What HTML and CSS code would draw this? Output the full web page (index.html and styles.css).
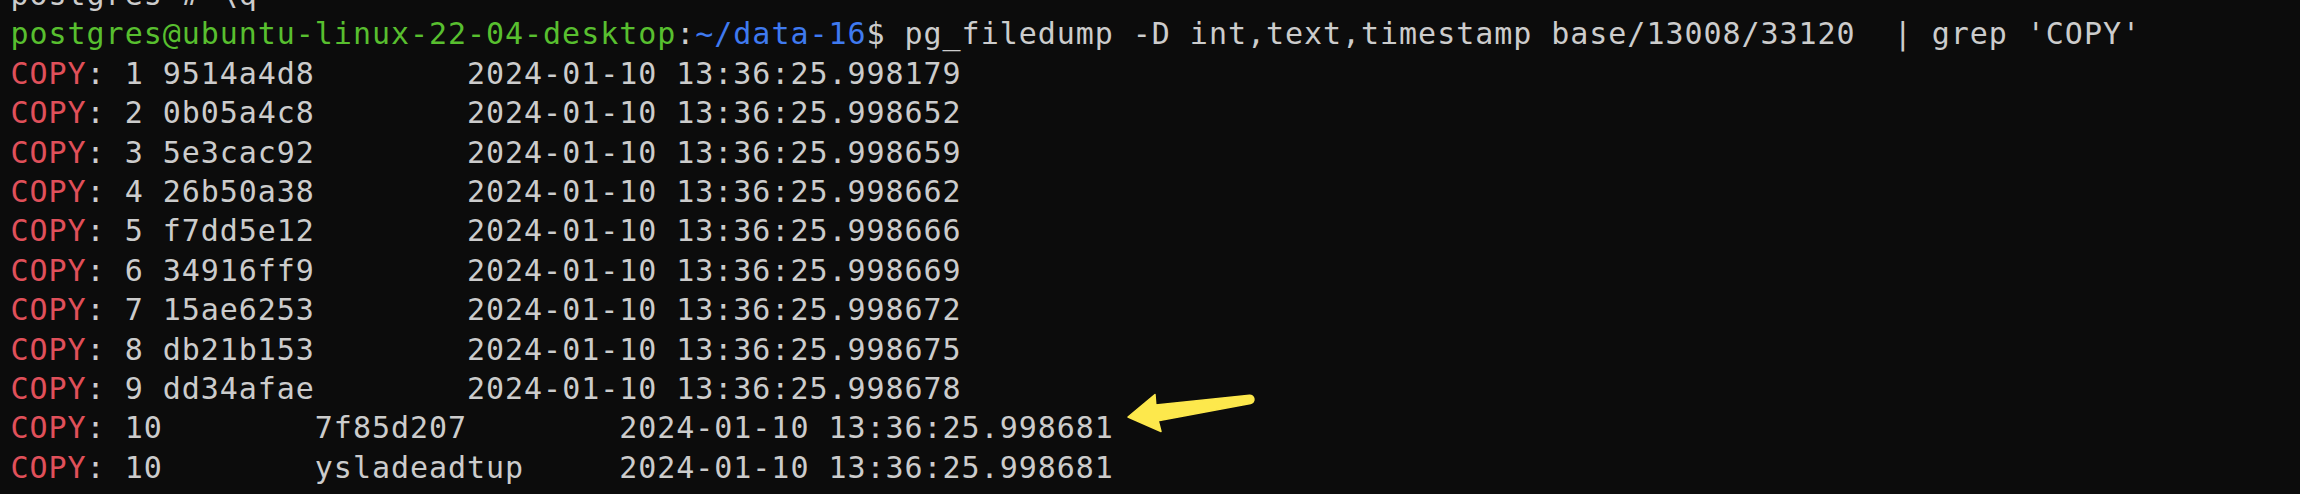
FILE: index.html
```html
<!DOCTYPE html>
<html lang="en">
<head>
<meta charset="utf-8">
<title>Terminal</title>
<link rel="stylesheet" href="styles.css">
</head>
<body>
<main class="terminal">
  <div class="screen">
    <div class="line">postgres=# \q</div>
    <div class="line"><span class="user">postgres@ubuntu-linux-22-04-desktop</span>:<span class="path">~/data-16</span>$ pg_filedump -D int,text,timestamp base/13008/33120  | grep 'COPY'</div>
    <div class="line"><span class="match">COPY</span>: 1 9514a4d8        2024-01-10 13:36:25.998179</div>
    <div class="line"><span class="match">COPY</span>: 2 0b05a4c8        2024-01-10 13:36:25.998652</div>
    <div class="line"><span class="match">COPY</span>: 3 5e3cac92        2024-01-10 13:36:25.998659</div>
    <div class="line"><span class="match">COPY</span>: 4 26b50a38        2024-01-10 13:36:25.998662</div>
    <div class="line"><span class="match">COPY</span>: 5 f7dd5e12        2024-01-10 13:36:25.998666</div>
    <div class="line"><span class="match">COPY</span>: 6 34916ff9        2024-01-10 13:36:25.998669</div>
    <div class="line"><span class="match">COPY</span>: 7 15ae6253        2024-01-10 13:36:25.998672</div>
    <div class="line"><span class="match">COPY</span>: 8 db21b153        2024-01-10 13:36:25.998675</div>
    <div class="line"><span class="match">COPY</span>: 9 dd34afae        2024-01-10 13:36:25.998678</div>
    <div class="line"><span class="match">COPY</span>: 10        7f85d207        2024-01-10 13:36:25.998681</div>
    <div class="line"><span class="match">COPY</span>: 10        ysladeadtup     2024-01-10 13:36:25.998681</div>
    <div class="line"><span class="user">postgres@ubuntu-linux-22-04-desktop</span>:<span class="path">~/data-16</span>$ </div>
  </div>
  <svg class="arrow" width="140" height="55" viewBox="0 0 140 55" aria-hidden="true">
    <path d="M8 32 L35 9.5 L35.8 19.9 L129.4 10.3 A4.2 4.2 0 0 1 130.6 18.6 L38.2 35.7 L41 46.5 Z" fill="#fde84c" stroke="#fde84c" stroke-width="1.5" stroke-linejoin="round"/>
  </svg>
</main>
</body>
</html>
```
FILE: styles.css
```css
html, body {
  margin: 0;
  padding: 0;
  background: #0c0c0c;
}

.terminal {
  position: relative;
  width: 2300px;
  height: 494px;
  overflow: hidden;
  background: #0c0c0c;
}

.screen {
  display: flex;
  flex-direction: column;
  margin-top: -25px;
  padding-left: 10.5px;
  font-family: "DejaVu Sans Mono", monospace;
  font-size: 30px;
  letter-spacing: 0.96px;
  line-height: 39.4px;
  color: #cccccc;
}

.line {
  white-space: pre;
  height: 39.4px;
}

.user {
  color: #58bf2f;
}

.path {
  color: #3f7af0;
}

.match {
  color: #e0505a;
}

.arrow {
  position: absolute;
  left: 1120px;
  top: 385px;
}
```
